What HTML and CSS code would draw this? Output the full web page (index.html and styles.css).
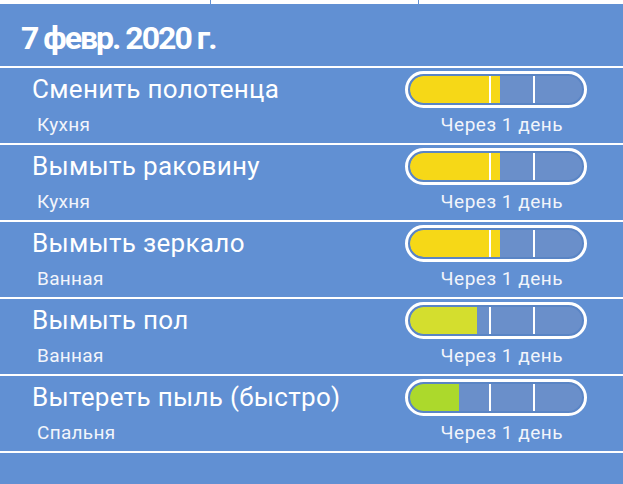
FILE: index.html
```html
<!DOCTYPE html>
<html lang="ru">
<head>
<meta charset="utf-8">
<link rel="stylesheet" href="styles.css">
</head>
<body>
<div class="topstrip">
  <div class="cell c1"></div>
  <div class="cell c2"></div>
  <div class="cell c3"></div>
</div>
<div class="header">7 февр. 2020 г.</div>
<div class="list">
  <div class="row">
    <div class="left">
      <div class="title">Сменить полотенца</div>
      <div class="sub">Кухня</div>
    </div>
    <div class="right">
      <div class="pill"><div class="track"><div class="fill yellow" style="width:90px"></div><span class="tick t1"></span><span class="tick t2"></span></div></div>
      <div class="when">Через 1 день</div>
    </div>
  </div>
  <div class="row">
    <div class="left">
      <div class="title">Вымыть раковину</div>
      <div class="sub">Кухня</div>
    </div>
    <div class="right">
      <div class="pill"><div class="track"><div class="fill yellow" style="width:90px"></div><span class="tick t1"></span><span class="tick t2"></span></div></div>
      <div class="when">Через 1 день</div>
    </div>
  </div>
  <div class="row">
    <div class="left">
      <div class="title">Вымыть зеркало</div>
      <div class="sub">Ванная</div>
    </div>
    <div class="right">
      <div class="pill"><div class="track"><div class="fill yellow" style="width:90px"></div><span class="tick t1"></span><span class="tick t2"></span></div></div>
      <div class="when">Через 1 день</div>
    </div>
  </div>
  <div class="row">
    <div class="left">
      <div class="title">Вымыть пол</div>
      <div class="sub">Ванная</div>
    </div>
    <div class="right">
      <div class="pill"><div class="track"><div class="fill lime" style="width:67px"></div><span class="tick t1"></span><span class="tick t2"></span></div></div>
      <div class="when">Через 1 день</div>
    </div>
  </div>
  <div class="row">
    <div class="left">
      <div class="title">Вытереть пыль (быстро)</div>
      <div class="sub">Спальня</div>
    </div>
    <div class="right">
      <div class="pill"><div class="track"><div class="fill green" style="width:49px"></div><span class="tick t1"></span><span class="tick t2"></span></div></div>
      <div class="when">Через 1 день</div>
    </div>
  </div>
  <div class="endline"></div>
</div>
</body>
</html>
```
FILE: styles.css
```css
html, body {
  margin: 0;
  padding: 0;
}
body {
  width: 623px;
  height: 484px;
  overflow: hidden;
  background: #6190d3;
  font-family: Roboto, "Noto Sans", sans-serif;
  color: #ffffff;
}
.topstrip {
  display: flex;
  height: 4px;
  background: #ffffff;
}
.cell {
  height: 4px;
}
.c1 { width: 210px; border-right: 1px solid #6190d3; }
.c2 { width: 207px; border-right: 1px solid #6190d3; }
.c3 { flex: 1; }
.header {
  height: 62px;
  display: flex;
  align-items: center;
  padding-left: 21px;
  padding-top: 6px;
  box-sizing: border-box;
  font-size: 32px;
  font-weight: 700;
  letter-spacing: -2px;
}
.row {
  display: flex;
  justify-content: space-between;
  border-top: 2px solid #ffffff;
  height: 75px;
}
.left {
  padding-left: 32px;
}
.title {
  font-size: 26px;
  line-height: 28px;
  margin-top: 7px;
  letter-spacing: 0.3px;
}
.sub {
  font-size: 19px;
  line-height: 20px;
  margin-top: 12px;
  padding-left: 5px;
  letter-spacing: 0.3px;
  color: #f2f5fb;
}
.right {
  width: 182px;
  margin-right: 36px;
  padding-top: 3px;
}
.pill {
  box-sizing: border-box;
  height: 37px;
  border: 3px solid #ffffff;
  border-radius: 19px;
  padding: 2px;
  background: #5a85c5;
}
.track {
  position: relative;
  height: 100%;
  border-radius: 14px;
  background: #6a8fca;
  overflow: hidden;
}
.fill {
  height: 100%;
  border-radius: 14px 0 0 14px;
}
.yellow { background: #f6d817; }
.lime { background: #d4de2e; }
.green { background: #acd92c; }
.tick {
  position: absolute;
  top: 0;
  bottom: 0;
  width: 2px;
  background: #ffffff;
}
.t1 { left: 79px; }
.t2 { left: 123px; }
.when {
  text-align: right;
  padding-right: 24px;
  font-size: 19px;
  line-height: 20px;
  margin-top: 7px;
  letter-spacing: 0.5px;
  color: #f2f5fb;
}
.endline {
  border-top: 2px solid #ffffff;
}
```
